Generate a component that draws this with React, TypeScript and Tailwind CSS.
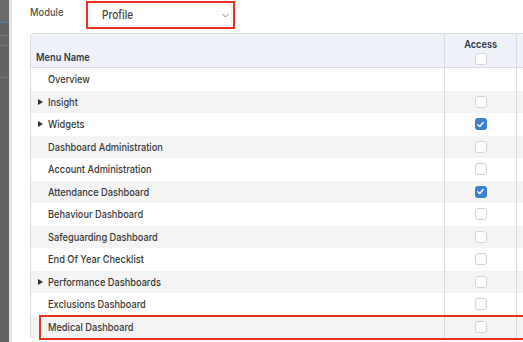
import React from "react";

const rows: { name: string; arrow?: boolean; cb?: boolean | null }[] = [
  { name: "Overview", cb: null },
  { name: "Insight", arrow: true, cb: false },
  { name: "Widgets", arrow: true, cb: true },
  { name: "Dashboard Administration", cb: false },
  { name: "Account Administration", cb: false },
  { name: "Attendance Dashboard", cb: true },
  { name: "Behaviour Dashboard", cb: false },
  { name: "Safeguarding Dashboard", cb: false },
  { name: "End Of Year Checklist", cb: false },
  { name: "Performance Dashboards", arrow: true, cb: false },
  { name: "Exclusions Dashboard", cb: false },
  { name: "Medical Dashboard", cb: false },
];

function Box({ checked }: { checked: boolean }) {
  if (checked) {
    return (
      <div className="w-[12px] h-[12px] rounded-[3px] bg-[#3b82d0] flex items-center justify-center">
        <svg width="9" height="9" viewBox="0 0 10 10">
          <path d="M2 5.2 L4.2 7.2 L8 2.8" fill="none" stroke="#fff" strokeWidth="1.6" strokeLinecap="round" strokeLinejoin="round" />
        </svg>
      </div>
    );
  }
  return <div className="w-[12px] h-[12px] rounded-[3px] border border-[#d4d4d4] bg-white" />;
}

export default function App() {
  return (
    <div
      className="w-[523px] h-[342px] overflow-hidden flex bg-white"
      style={{ fontFamily: "Inter, 'Noto Sans', sans-serif" }}
    >
      <div className="w-[9px] h-full bg-[#636363] flex flex-col shrink-0">
        <div className="h-[22px] bg-[#6a6a6a]" />
        <div className="h-[1px] bg-[#4a7bb5]" />
        <div className="h-[12px]" />
        <div className="h-[1px] bg-[#777]" />
        <div className="h-[9px]" />
        <div className="h-[1px] bg-[#777]" />
        <div className="h-[31px]" />
        <div className="h-[1px] bg-[#777]" />
      </div>
      <div className="w-[3px] h-full bg-[#e3e3e3] shrink-0" />
      <div className="flex-1 min-w-0 pl-[18px] flex flex-col">
        <div className="h-[33px] flex items-start">
          <div className="w-[56px] mt-[5px] flex">
            <span className="inline-block text-[11px] leading-[14px] font-medium text-[#555] origin-left scale-x-[0.85]">Module</span>
          </div>
          <div className="mt-[1px] w-[149px] h-[28px] border-2 border-[#e8321f] p-[1px]">
            <div className="h-full border border-[#eee] bg-white flex items-center justify-between pl-[12px] pr-[2px]">
              <span className="inline-block text-[12px] font-medium text-[#444] origin-left scale-x-[0.84]">Profile</span>
              <svg width="7" height="5" viewBox="0 0 7 5">
                <path d="M0.5 1 L3.5 4 L6.5 1" fill="none" stroke="#888" strokeWidth="1" />
              </svg>
            </div>
          </div>
        </div>
        <div className="w-[520px] border-l border-t border-[#dcdcdc] rounded-tl-[3px]">
          <div className="flex h-[34px] bg-[#eef2f8] border-b border-[#dcdcdc]">
            <div className="w-[413px] flex items-end pl-[5px] pb-[2px]">
              <span className="inline-block text-[11px] font-semibold text-[#2f3a4d] origin-left scale-x-[0.84]">Menu Name</span>
            </div>
            <div className="w-[72px] border-l border-[#dcdcdc] flex flex-col items-center pt-[3px]">
              <span className="inline-block text-[11px] font-semibold text-[#2f3a4d] leading-[14px] scale-x-[0.84]">Access</span>
              <div className="mt-[2px]"><Box checked={false} /></div>
            </div>
            <div className="flex-1 border-l border-[#dcdcdc]" />
          </div>
          {rows.map((r, i) => {
            const medical = r.name === "Medical Dashboard";
            return (
              <div
                key={r.name}
                className={`flex h-[22.5px] ${i % 2 === 1 ? "bg-[#f4f4f4]" : "bg-white"} relative`}
              >
                <div className="w-[413px] flex items-center pl-[7px]">
                  <span className="w-[9px] flex items-center">
                    {r.arrow && (
                      <svg width="5" height="6" viewBox="0 0 5 6">
                        <path d="M0 0 L5 3 L0 6 Z" fill="#333" />
                      </svg>
                    )}
                  </span>
                  <span className="inline-block text-[11px] font-medium text-[#3a3a3a] ml-[1px] origin-left scale-x-[0.84] whitespace-nowrap">{r.name}</span>
                </div>
                <div className="w-[72px] border-l border-[#dcdcdc] flex items-center justify-center">
                  {r.cb !== null && r.cb !== undefined && <Box checked={r.cb} />}
                </div>
                <div className="flex-1 border-l border-[#dcdcdc]" />
                {medical && (
                  <div className="absolute left-[8px] right-0 top-[-1px] bottom-[-2px] border-2 border-[#e8321f] pointer-events-none" />
                )}
              </div>
            );
          })}
        </div>
      </div>
    </div>
  );
}
